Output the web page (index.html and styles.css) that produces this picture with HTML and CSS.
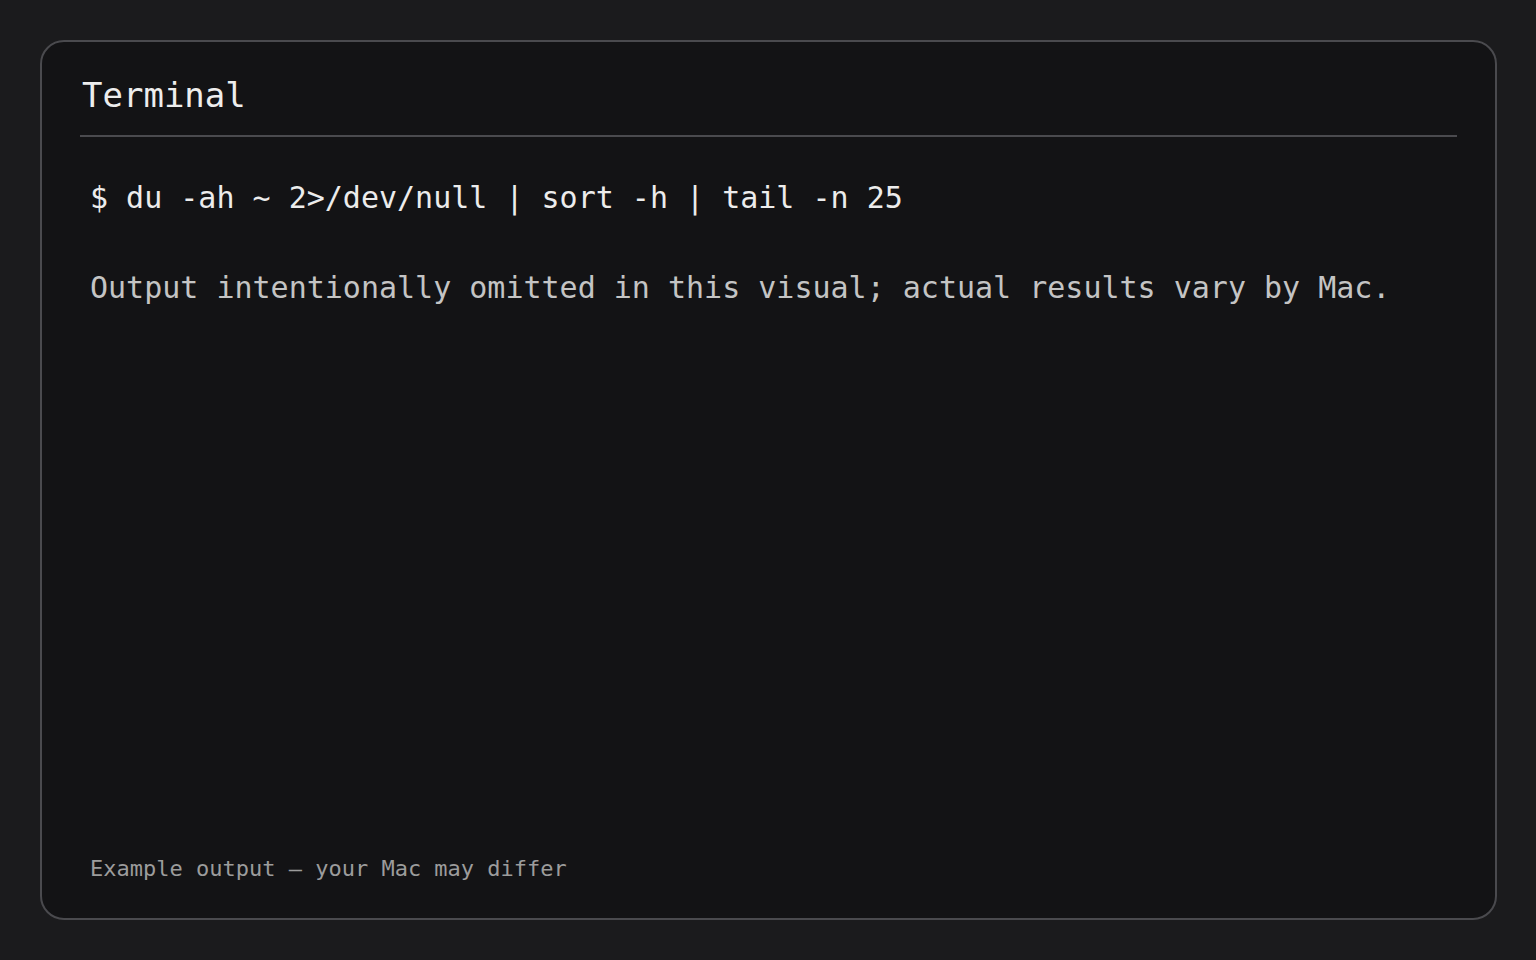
FILE: index.html
```html
<!DOCTYPE html>
<html lang="en">
<head>
<meta charset="utf-8">
<title>Terminal</title>
<link rel="stylesheet" href="styles.css">
</head>
<body>
<main class="card">
  <header class="card-header">
    <h1 class="title">Terminal</h1>
  </header>
  <section class="content">
    <div class="command">$ du -ah ~ 2&gt;/dev/null | sort -h | tail -n 25</div>
    <div class="output">Output intentionally omitted in this visual; actual results vary by Mac.</div>
  </section>
  <footer class="note">Example output — your Mac may differ</footer>
</main>
</body>
</html>
```

FILE: styles.css
```css
html, body {
  margin: 0;
  padding: 0;
}
body {
  background: #1b1b1d;
  font-family: "DejaVu Sans Mono", "Liberation Mono", monospace;
  padding: 40px;
  box-sizing: border-box;
  height: 960px;
}
.card {
  box-sizing: border-box;
  width: 1457px;
  height: 880px;
  background: #131315;
  border: 2px solid #4a4a4e;
  border-radius: 24px;
  padding: 0 38px 0 38px;
  display: flex;
  flex-direction: column;
}
.card-header {
  border-bottom: 2px solid #4a4a4e;
  padding-top: 33px;
  padding-bottom: 20px;
}
.title {
  margin: 0;
  padding-left: 2px;
  font-weight: normal;
  font-size: 34px;
  line-height: 40px;
  color: #ededed;
}
.content {
  padding: 43px 10px 0 10px;
  flex: 1;
}
.command {
  font-size: 30px;
  line-height: 36px;
  color: #ececec;
}
.output {
  margin-top: 54px;
  font-size: 30px;
  line-height: 36px;
  color: #c4c4c4;
}
.note {
  padding: 0 10px 35px 10px;
  font-size: 22px;
  line-height: 28px;
  color: #9c9c9c;
}
```
